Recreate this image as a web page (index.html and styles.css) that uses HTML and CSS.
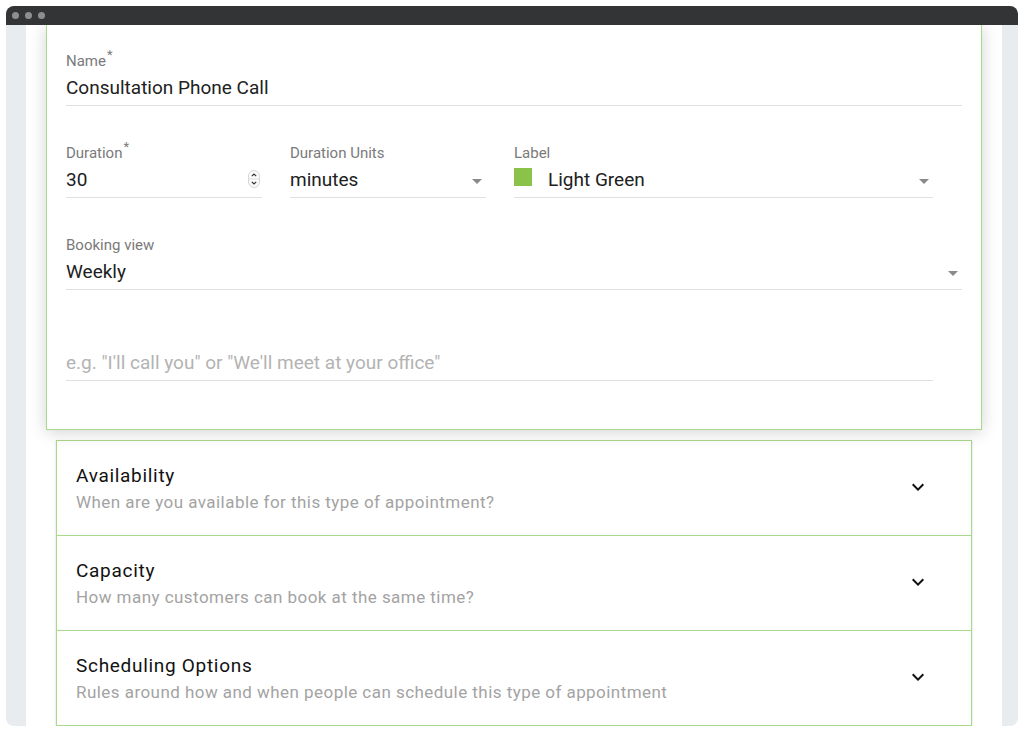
FILE: index.html
```html
<!DOCTYPE html>
<html>
<head>
<meta charset="utf-8">
<link rel="stylesheet" href="styles.css">
</head>
<body>
<div class="window">
  <div class="titlebar">
    <span class="dot"></span><span class="dot"></span><span class="dot"></span>
  </div>
  <div class="viewport">
    <div class="page">
      <div class="card">
        <div class="field">
          <div class="label">Name<sup>*</sup></div>
          <div class="value">Consultation Phone Call</div>
        </div>
        <div class="row">
          <div class="field">
            <div class="label">Duration<sup>*</sup></div>
            <div class="value">
              <span class="grow">30</span>
              <svg class="spinner" width="12" height="18" viewBox="0 0 12 18">
                <rect x="0.5" y="0.5" width="11" height="17" rx="5.5" fill="#fafafa" stroke="#d6d6d6"/>
                <line x1="1" y1="9" x2="11" y2="9" stroke="#e0e0e0"/>
                <path d="M3.8 6.2 L6 4 L8.2 6.2" fill="none" stroke="#333" stroke-width="1.2"/>
                <path d="M3.8 11.8 L6 14 L8.2 11.8" fill="none" stroke="#333" stroke-width="1.2"/>
              </svg>
            </div>
          </div>
          <div class="field">
            <div class="label">Duration Units</div>
            <div class="value"><span class="grow">minutes</span><span class="caret"></span></div>
          </div>
          <div class="field">
            <div class="label">Label</div>
            <div class="value"><span class="swatch"></span><span class="grow">Light Green</span><span class="caret"></span></div>
          </div>
        </div>
        <div class="field">
          <div class="label">Booking view</div>
          <div class="value"><span class="grow">Weekly</span><span class="caret"></span></div>
        </div>
        <div class="field field-short">
          <div class="label"></div>
          <div class="value placeholder">e.g. "I'll call you" or "We'll meet at your office"</div>
        </div>
      </div>

      <div class="panels">
        <div class="panel">
          <div class="panel-text">
            <div class="panel-title">Availability</div>
            <div class="panel-sub">When are you available for this type of appointment?</div>
          </div>
          <svg class="chev" width="24" height="24" viewBox="0 0 24 24"><path d="M7.41 8.59L12 13.17l4.59-4.58L18 10l-6 6-6-6 1.41-1.41z" fill="#111"/></svg>
        </div>
        <div class="panel">
          <div class="panel-text">
            <div class="panel-title">Capacity</div>
            <div class="panel-sub">How many customers can book at the same time?</div>
          </div>
          <svg class="chev" width="24" height="24" viewBox="0 0 24 24"><path d="M7.41 8.59L12 13.17l4.59-4.58L18 10l-6 6-6-6 1.41-1.41z" fill="#111"/></svg>
        </div>
        <div class="panel">
          <div class="panel-text">
            <div class="panel-title">Scheduling Options</div>
            <div class="panel-sub">Rules around how and when people can schedule this type of appointment</div>
          </div>
          <svg class="chev" width="24" height="24" viewBox="0 0 24 24"><path d="M7.41 8.59L12 13.17l4.59-4.58L18 10l-6 6-6-6 1.41-1.41z" fill="#111"/></svg>
        </div>
      </div>
    </div>
  </div>
</div>
</body>
</html>
```

FILE: styles.css
```css
html, body {
  margin: 0;
  padding: 0;
  background: #ffffff;
}
body {
  font-family: Roboto, "Liberation Sans", sans-serif;
  width: 1024px;
  height: 732px;
  overflow: hidden;
}
.window {
  margin: 6px 6px 0 6px;
  width: 1012px;
  height: 720px;
  border-radius: 8px;
  overflow: hidden;
  display: flex;
  flex-direction: column;
  background: #e9ecef;
}
.titlebar {
  height: 19px;
  flex: none;
  background: #333435;
  display: flex;
  align-items: center;
  padding-left: 6px;
  gap: 6px;
}
.dot {
  width: 7px;
  height: 7px;
  border-radius: 50%;
  background: #8e8e8e;
}
.viewport {
  flex: 1;
  padding: 0 16px 0 20px;
  overflow: hidden;
}
.page {
  background: #ffffff;
  height: 100%;
  padding: 0 20px;
  box-sizing: border-box;
  overflow: hidden;
}
.card {
  border: 1px solid #a9d98a;
  border-top: none;
  background: #fff;
  box-shadow: 0 2px 16px rgba(0, 0, 0, 0.18);
  padding: 28px 19px 48px 19px;
  position: relative;
  z-index: 1;
}
.field {
  display: flex;
  flex-direction: column;
}
.field + .field, .row + .field, .field + .row {
  margin-top: 39px;
}
.field-short {
  margin-right: 29px;
  margin-top: 38px !important;
}
.row {
  display: grid;
  grid-template-columns: 196px 196px 419px;
  column-gap: 28px;
}
.row .field + .field {
  margin-top: 0;
}
.label {
  font-size: 15px;
  line-height: 16px;
  height: 16px;
  color: #7a7a7a;
  margin-bottom: 7px;
}
.label sup {
  font-size: 13px;
  line-height: 0;
  position: relative;
  top: -1px;
  vertical-align: super;
  margin-left: 1px;
}
.value {
  font-size: 19px;
  line-height: 24px;
  height: 24px;
  color: #212121;
  padding-bottom: 5px;
  border-bottom: 1px solid #e0e0e0;
  display: flex;
  align-items: center;
}
.placeholder {
  color: #b3b3b3;
}
.grow {
  flex: 1;
}
.spinner {
  margin-right: 2px;
  margin-top: -2px;
}
.caret {
  width: 0;
  height: 0;
  border-left: 5px solid transparent;
  border-right: 5px solid transparent;
  border-top: 5px solid #8a8a8a;
  margin-right: 4px;
  margin-top: 3px;
}
.swatch {
  width: 18px;
  height: 18px;
  background: #8bc34a;
  margin-right: 16px;
  margin-top: -6px;
}
.panels {
  margin: 10px 10px 0 10px;
}
.panel {
  border: 1px solid #a9d98a;
  border-bottom: none;
  background: #fff;
  height: 94px;
  padding: 0 41px 0 19px;
  display: flex;
  align-items: center;
  box-shadow: 0 1px 2px rgba(0, 0, 0, 0.18);
  position: relative;
}
.panel:last-child {
  border-bottom: 1px solid #a9d98a;
}
.panel-text {
  flex: 1;
}
.panel-title {
  font-size: 19px;
  line-height: 24px;
  color: #111111;
  letter-spacing: 0.7px;
}
.panel-sub {
  font-size: 17px;
  line-height: 22px;
  color: #a3a3a3;
  letter-spacing: 0.45px;
  margin-top: 3px;
}
.chev {
  flex: none;
  margin-top: -2px;
}
```
